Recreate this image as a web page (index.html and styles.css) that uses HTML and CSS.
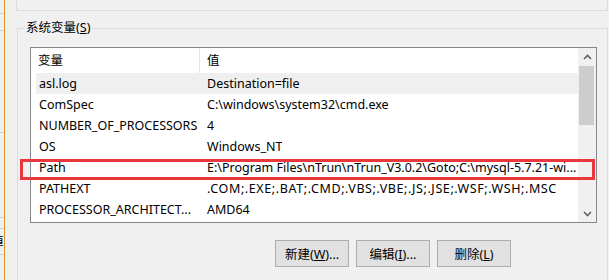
FILE: index.html
```html
<!DOCTYPE html>
<html lang="zh-CN">
<head>
    <meta charset="UTF-8">
    <title>系统变量</title>
    <link rel="stylesheet" href="styles.css">
</head>
<body>
<div class="desk">
    <div class="side">
        <div class="side-row r1"></div>
        <div class="side-row r2"></div>
        <div class="side-row r3"></div>
        <div class="side-row r4"></div>
        <div class="side-row r5"></div>
        <div class="side-row r6"><span class="cut">値</span></div>
    </div>
    <div class="dialog">
        <div class="prev-group"></div>
        <div class="group">
            <div class="group-title">系统变量(<u>S</u>)</div>
            <div class="listbox">
                <div class="table">
                    <div class="row head"><span class="c1">变量</span><span class="c2">值</span></div>
                    <div class="row item hot"><span class="c1">asl.log</span><span class="c2">Destination=file</span></div>
                    <div class="row item"><span class="c1">ComSpec</span><span class="c2">C:\windows\system32\cmd.exe</span></div>
                    <div class="row item"><span class="c1">NUMBER_OF_PROCESSORS</span><span class="c2">4</span></div>
                    <div class="row item"><span class="c1">OS</span><span class="c2">Windows_NT</span></div>
                    <div class="row item"><span class="c1">Path</span><span class="c2">E:\Program Files\nTrun\nTrun_V3.0.2\Goto;C:\mysql-5.7.21-wi...</span></div>
                    <div class="row item"><span class="c1">PATHEXT</span><span class="c2 wide">.COM;.EXE;.BAT;.CMD;.VBS;.VBE;.JS;.JSE;.WSF;.WSH;.MSC</span></div>
                    <div class="row item"><span class="c1">PROCESSOR_ARCHITECT...</span><span class="c2">AMD64</span></div>
                </div>
                <div class="scrollbar">
                    <div class="arrow">
                        <svg width="9" height="6" viewBox="0 0 9 6"><polyline points="1,5 4.5,1.5 8,5" fill="none" stroke="#606060" stroke-width="1.6"/></svg>
                    </div>
                    <div class="thumb"></div>
                    <div class="track"></div>
                    <div class="arrow">
                        <svg width="9" height="6" viewBox="0 0 9 6"><polyline points="1,1 4.5,4.5 8,1" fill="none" stroke="#606060" stroke-width="1.6"/></svg>
                    </div>
                </div>
            </div>
            <div class="buttons">
                <button class="btn">新建(<u>W</u>)...</button>
                <button class="btn">编辑(<u>I</u>)...</button>
                <button class="btn">删除(<u>L</u>)</button>
            </div>
            <!-- 标注框 -->
            <div class="mark"></div>
        </div>
    </div>
</div>
</body>
</html>
```

FILE: styles.css
```css
body {
    margin: 0;
    width: 609px;
    height: 280px;
    overflow: hidden;
    background: #f0f0f0;
    font-family: "Noto Sans", "Noto Sans CJK SC", sans-serif;
    font-size: 12.5px;
    color: #000;
}

.desk {
    display: flex;
    height: 280px;
}

.side {
    width: 4px;
    border-right: 1px solid #e69628;
    display: flex;
    flex-direction: column;
    overflow: hidden;
}

.side-row {
    box-sizing: border-box;
    border-bottom: 1px solid #d2d2d2;
}

.r1 { height: 14px; }
.r2 { height: 17px; }
.r3 { height: 102px; }
.r4 { height: 85px; }
.r5 { height: 11px; }
.r6 { height: 26px; }

.cut {
    display: block;
    margin-left: -9px;
    line-height: 24px;
    font-family: "Noto Sans CJK JP", sans-serif;
}

.dialog {
    flex: 1;
    padding-left: 11px;
    display: flex;
    flex-direction: column;
}

.prev-group {
    box-sizing: border-box;
    height: 11px;
    margin-right: 1px;
    border: 1px solid #dcdcdc;
    border-top: none;
}

.group {
    position: relative;
    flex: 1;
    margin: 17px 1px 0 1px;
    padding: 0 10px 0 12px;
    border: 1px solid #dcdcdc;
    border-bottom: none;
    display: flex;
    flex-direction: column;
}

.group-title {
    align-self: flex-start;
    margin: -9px 0 0 -6px;
    padding: 0 2px;
    line-height: 16px;
    background: #f0f0f0;
}

.listbox {
    margin-top: 11px;
    height: 174px;
    border: 1px solid #828790;
    background: #fff;
    display: flex;
}

.table {
    flex: 1;
    min-width: 0;
}

.row {
    display: flex;
    white-space: nowrap;
}

.head {
    height: 25px;
    line-height: 25px;
}

.head .c1 {
    width: 161px;
    padding-left: 7px;
    border-right: 1px solid #e5e5e5;
}

.head .c2 {
    padding-left: 7px;
}

.item {
    height: 21px;
    line-height: 21px;
    margin-left: 5px;
}

.item .c1 {
    width: 160px;
    padding-left: 3px;
    overflow: hidden;
}

.item .c2 {
    padding-left: 8px;
    overflow: hidden;
}

.item .wide {
    letter-spacing: 0.6px;
}

.hot {
    background: #efefef;
}

.scrollbar {
    width: 18px;
    background: #f0f0f0;
    display: flex;
    flex-direction: column;
}

.arrow {
    height: 17px;
    display: flex;
    align-items: center;
    justify-content: center;
}

.thumb {
    height: 59px;
    margin: 1px 2px 0 1px;
    background: #cdcdcd;
}

.track {
    flex: 1;
}

.buttons {
    display: flex;
    justify-content: flex-end;
    gap: 7px;
    margin: 17px 86px 0 0;
}

.btn {
    width: 74px;
    height: 27px;
    padding: 0;
    background: #e1e1e1;
    border: 1px solid #adadad;
    font-family: "Noto Sans", "Noto Sans CJK SC", sans-serif;
    font-size: 12.5px;
    color: #000;
}

.mark {
    position: absolute;
    left: 2px;
    top: 130px;
    width: 575px;
    height: 21px;
    box-sizing: border-box;
    border: 3px solid #e8383b;
}
```
